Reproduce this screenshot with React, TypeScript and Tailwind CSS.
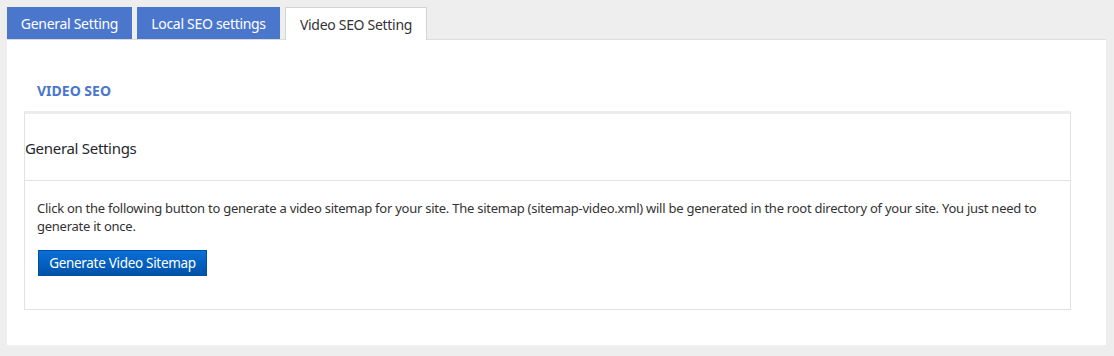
import React from 'react';

const tabs = [
  { label: 'General Setting', w: 'w-[125px]' },
  { label: 'Local SEO settings', w: 'w-[143px]' },
  { label: 'Video SEO Setting', w: 'w-[142px]' },
];

export default function App() {
  const active = 2;

  return (
    <div className="min-h-[356px] w-[1114px] bg-[#eeeeee] pt-[7px] pl-[7px] pr-[8px] pb-[11px] font-['Noto_Sans',sans-serif]">
      {/* tabs */}
      <div className="flex gap-[5px] border-b border-[#dddddd] h-[33px]">
        {tabs.map((t, i) =>
          i === active ? (
            <div
              key={t.label}
              className={`${t.w} h-[33px] flex items-center justify-center bg-white border border-b-0 border-[#d4d4d4] text-[14px] tracking-[-0.3px] text-[#333333]`}
            >
              {t.label}
            </div>
          ) : (
            <div
              key={t.label}
              className={`${t.w} h-[32px] flex items-center justify-center bg-[#4a77cc] text-[14px] tracking-[-0.3px] text-white`}
            >
              {t.label}
            </div>
          )
        )}
      </div>

      {/* panel */}
      <div className="bg-white h-[305px] pt-[41px] px-[17px]">
        <h2 className="pl-[13px] text-[14px] font-bold text-[#4a77cc] leading-[20px] mb-[10px]">VIDEO SEO</h2>

        <div className="w-[1047px] border border-[#e2e2e2] border-t-[3px] border-t-[#ececec]">
          <div className="h-[67px] flex items-center border-b border-[#e2e2e2]">
            <h3 className="text-[15px] tracking-[-0.3px] text-[#23282d] leading-none pt-[3px]">General Settings</h3>
          </div>
          <div className="px-[12px] pt-[18px] pb-[33px]">
            <p className="text-[13px] leading-[18px] tracking-[-0.25px] text-[#333333]">
              Click on the following button to generate a video sitemap for your site. The sitemap (sitemap-video.xml) will be generated in the root directory of your site. You just need to generate it once.
            </p>
            <button className="mt-[15px] ml-px w-[169px] h-[26px] text-[13.5px] tracking-[-0.3px] text-white bg-gradient-to-b from-[#0a6fd8] to-[#0052a8] border border-[#0050a0]">
              Generate Video Sitemap
            </button>
          </div>
        </div>
      </div>
    </div>
  );
}
